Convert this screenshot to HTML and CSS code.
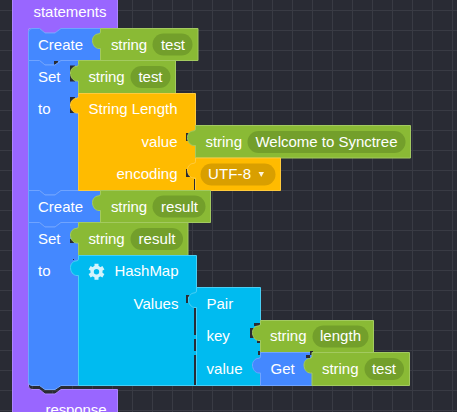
FILE: index.html
```html
<!DOCTYPE html>
<html lang="en">
<head>
<meta charset="utf-8">
<title>Block workspace</title>
<link rel="stylesheet" href="styles.css">
</head>
<body>
<svg class="workspace" width="457" height="412" viewBox="0 0 457 412">
  <defs>
    <pattern id="grid" x="12" y="10" width="20" height="20" patternUnits="userSpaceOnUse">
      <path class="grid-line" d="M.5 0V20M0 .5H20"/>
    </pattern>
  </defs>
  <rect class="canvas" width="457" height="412"/>
  <rect width="457" height="412" fill="url(#grid)"/>

  <path class="block purple" d="M12.500-5H117.500V28.500H61L55 33H45L39.500 28.500H28.500V386Q28.500 389.500 32 389.500H39.500L45 394H55L61 389.500H117.500V420H12.500Z"/>

  <path class="block blue" d="M28.500 32Q28.500 28.500 32 28.500H39.500L45 33H55L61 28.500H110V60.500H61L55 65H45L39.500 60.500H28.500Z"/>
  <path class="gap" d="M54 61h4v2l-3 2h-1z"/>
  <path class="block blue" d="M28.500 60.500H39.500L45 65H55L61 60.500H90V190.500H61L55 195H45L39.500 190.500H28.500Z"/>
  <path class="block blue" d="M28.500 190.500H39.500L45 195H55L61 190.500H110V222.500H61L55 227H45L39.500 222.500H28.500Z"/>
  <path class="block blue" d="M28.500 222.500H39.500L45 227H55L61 222.500H90V385.500H61L55 389.500H45L39.500 385.500H32Q28.500 385.500 28.500 382Z"/>

  <path class="gap" d="M70 65.500h5v16h-5zM70 97h5v16h-5zM70 239h4v4h-4zM73 259h1v1h-1z"/>

  <path class="block green" d="M100.500 28.500H198V60.500H100.500V48.500h-1.500c-4 0-6.500-4-6.500-8s3-6.500 5.500-6.500q2.500 0 2.500-2Z"/>
  <path class="block green" d="M78.500 60.500H175.500V93.500H78.500V81h-1.500c-4 0-6.500-4-6.500-8s3-6.500 5.500-6.500q2.500 0 2.500-2Z"/>
  <path class="block yellow" d="M78.500 93.500H195.500V190.500H78.500V113h-1.500c-4 0-6.500-4-6.500-8s3-6.500 5.500-6.500q2.500 0 2.500-2Z"/>
  <path class="gap" d="M186 133h2v8h-2zM186 133h4v2h-4zM186 169h4v8h-4zM194 179h1.500v11h-1.500z"/>
  <path class="block green" d="M195.500 125.500H410.500V158H195.500V145.500h-1.500c-4 0-6.500-4-6.500-8s3-6.500 5.500-6.500q2.500 0 2.500-2Z"/>
  <path class="block yellow" d="M195.500 158H280.500V190.500H195.500V178h-1.500c-4 0-6.500-4-6.500-8s3-6.500 5.500-6.500q2.500 0 2.500-2Z"/>
  <path class="block green" d="M100.500 190.500H210.500V222.500H100.500V210.500h-1.500c-4 0-6.500-4-6.500-8s3-6.500 5.500-6.500q2.500 0 2.500-2Z"/>
  <path class="block green" d="M78.500 222.500H188V255.500H78.500V243h-1.500c-4 0-6.500-4-6.500-8s3-6.500 5.500-6.500q2.500 0 2.500-2Z"/>
  <path class="block cyan" d="M78.500 255.500H196.500V385.500H78.500V275.500h-1.500c-4 0-6.500-4-6.500-8s3-6.500 5.500-6.500q2.500 0 2.500-2Z"/>
  <path class="gap" d="M186 295h4v2h-2v6h-2zM194 308h2v27h-2zM194 339h2v12h-2zM194 355h2v30h-2z"/>
  <path class="block cyan" d="M196.500 287.500H260.500V385.500H196.500V307.500h-1.500c-4 0-6.500-4-6.500-8s3-6.500 5.500-6.500q2.500 0 2.500-2Z"/>
  <path class="gap" d="M254 323h6v3h-6zM250 328h4v10h-4zM257 340h3v3h-3zM258 351h2v4h-2z"/>
  <path class="block green" d="M260.500 320.500H373.500V352.500H260.500V340.500h-1.500c-4 0-6.500-4-6.500-8s3-6.500 5.500-6.500q2.500 0 2.500-2Z"/>
  <path class="block blue" d="M260.500 352.500H320V385.500H260.500V373h-1.500c-4 0-6.500-4-6.500-8s3-6.500 5.500-6.500q2.500 0 2.500-2Z"/>
  <path class="gap" d="M310 351h3v4h-3zM306 355h4v3h-4z"/>
  <path class="block green" d="M312 352.500H409.500V385.500H312V373h-1.500c-4 0-6.500-4-6.500-8s3-6.500 5.500-6.500q2.500 0 2.500-2Z"/>

  <g class="field">
    <rect x="152.500" y="33.500" width="40" height="22" rx="11"/>
    <rect x="130.500" y="66" width="40" height="22" rx="11"/>
    <rect x="247.500" y="131" width="158" height="22" rx="11"/>
    <rect x="152.500" y="195.500" width="53" height="22" rx="11"/>
    <rect x="130.500" y="228" width="52.500" height="22" rx="11"/>
    <rect x="312.500" y="325.500" width="56" height="22" rx="11"/>
    <rect x="364.500" y="358" width="39.500" height="22" rx="11"/>
  </g>
  <rect class="dropdown" x="200.500" y="163.500" width="75" height="22" rx="11"/>
  <path class="mark" d="M258.500 172h5.500l-2.750 5z"/>

  <g class="gear" transform="translate(96.500 271.700)">
    <circle r="4.400"/>
    <path d="M0-8V-5M0 8V5M-6.900-4L-4.300-2.500M6.900-4L4.300-2.500M-6.900 4L-4.300 2.500M6.900 4L4.300 2.500"/>
  </g>

  <g class="label">
    <text x="33.500" y="17" textLength="73">statements</text>
    <text x="38" y="50" textLength="45">Create</text>
    <text x="111" y="50" textLength="36">string</text>
    <text x="161" y="50" textLength="24">test</text>
    <text x="38" y="82">Set</text>
    <text x="88.500" y="82" textLength="36">string</text>
    <text x="138.500" y="82" textLength="24">test</text>
    <text x="38" y="114">to</text>
    <text x="88.500" y="114" textLength="89">String Length</text>
    <text x="141.500" y="147" textLength="36">value</text>
    <text x="205.500" y="147" textLength="36.500">string</text>
    <text x="255.500" y="147" textLength="142">Welcome to Synctree</text>
    <text x="116.500" y="179" textLength="61">encoding</text>
    <text x="208" y="179" textLength="43">UTF-8</text>
    <text x="38" y="212" textLength="45">Create</text>
    <text x="111" y="212" textLength="36">string</text>
    <text x="161" y="212" textLength="37">result</text>
    <text x="38" y="244">Set</text>
    <text x="88.500" y="244" textLength="36">string</text>
    <text x="138.500" y="244" textLength="37">result</text>
    <text x="38" y="276">to</text>
    <text x="114.500" y="276" textLength="64">HashMap</text>
    <text x="133.500" y="309" textLength="45">Values</text>
    <text x="206.500" y="309">Pair</text>
    <text x="206.500" y="341">key</text>
    <text x="270" y="341" textLength="36.500">string</text>
    <text x="320" y="341" textLength="41">length</text>
    <text x="206.500" y="374" textLength="36">value</text>
    <text x="270.500" y="374">Get</text>
    <text x="322" y="374" textLength="36.500">string</text>
    <text x="372" y="374" textLength="24">test</text>
    <text x="45.500" y="415" textLength="61">response</text>
  </g>
</svg>
</body>
</html>
```
FILE: styles.css
```css
body {
  margin: 0;
  overflow: hidden;
  background: #292b34;
}

.workspace {
  display: block;
}

.canvas,
.gap {
  fill: #292b34;
}

.grid-line {
  fill: none;
  stroke: #393b44;
}

.block {
  stroke-width: 1;
}

.purple {
  fill: #9966ff;
  stroke: #ad85ff;
}

.blue {
  fill: #4488ff;
  stroke: #70a4ff;
}

.green {
  fill: #8aba35;
  stroke: #a3ca60;
}

.yellow {
  fill: #ffbb00;
  stroke: #ffca3c;
}

.cyan {
  fill: #00bbf0;
  stroke: #49cff5;
}

.field rect {
  fill: #739f2b;
}

.dropdown {
  fill: #d99f00;
}

.mark {
  fill: #fff5d9;
}

.gear {
  fill: none;
  stroke: #d3f3fc;
}

.gear circle {
  stroke-width: 3.4;
}

.gear path {
  stroke-width: 4;
}

.label {
  fill: #fff;
  font: 15px "Liberation Sans", Arial, sans-serif;
}
```
